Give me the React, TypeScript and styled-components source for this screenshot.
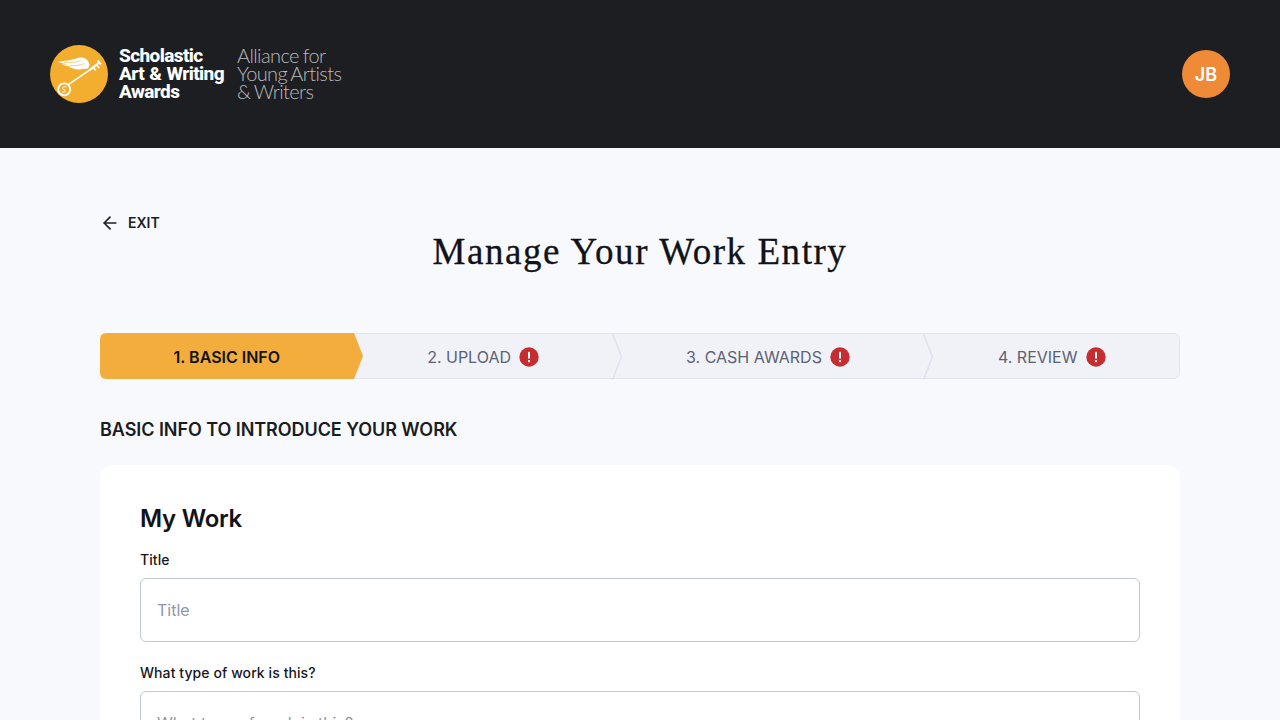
import React from "react";
import styled, { createGlobalStyle } from "styled-components";
import { ArrowLeft } from "lucide-react";

const Global = createGlobalStyle`
  html, body { margin: 0; padding: 0; background: #f8f9fd; overflow: hidden; }
  body { font-family: Inter, "Liberation Sans", sans-serif; color: #14161a; }
  * { box-sizing: border-box; }
`;

const Header = styled.header`
  height: 148px;
  background: #1c1e21;
  padding: 0 50px;
  display: flex;
  align-items: center;
  justify-content: space-between;
`;
const Logo = styled.div`
  display: flex;
  align-items: center;
`;
const BrandName = styled.div`
  margin-left: 11px;
  font-family: Roboto, "Liberation Sans", sans-serif;
  font-weight: 800;
  font-size: 19px;
  line-height: 18px;
  letter-spacing: -0.6px;
  word-spacing: 1px;
  color: #fff;
  white-space: nowrap;
`;
const BrandTag = styled.div`
  margin: -2px 0 0 13px;
  font-family: Lato, "Liberation Sans", sans-serif;
  font-weight: 300;
  font-size: 20px;
  line-height: 18px;
  letter-spacing: -0.6px;
  word-spacing: -1px;
  color: #b9babc;
  white-space: nowrap;
`;
const Avatar = styled.div`
  width: 48px;
  height: 48px;
  border-radius: 50%;
  background: #ef8a37;
  color: #fff;
  font-weight: 600;
  font-size: 18px;
  display: flex;
  align-items: center;
  justify-content: center;
`;
const Main = styled.main`
  width: 1080px;
  margin: 0 auto;
  padding-top: 66px;
`;
const ExitLink = styled.a`
  display: flex;
  align-items: center;
  gap: 8px;
  height: 18px;
  font-weight: 600;
  font-size: 14px;
  line-height: 18px;
  color: #1b1d24;
  svg { margin-top: -1px; }
`;
const Title = styled.h1`
  margin: -5px 0 0;
  text-align: center;
  font-family: "Liberation Serif", serif;
  font-weight: 400;
  font-size: 37px;
  line-height: 50px;
  letter-spacing: 1.55px;
  color: #111318;
  -webkit-text-stroke: 0.3px #111318;
`;
const Steps = styled.nav`
  margin-top: 56px;
  height: 46px;
  display: flex;
  border-radius: 6px;
  background: #f1f2f8;
  border: 1px solid #e1e3ed;
`;
const Step = styled.div<{ $active?: boolean }>`
  position: relative;
  flex: 1 1 auto;
  padding: 1px 73px 0;
  display: flex;
  align-items: center;
  justify-content: center;
  gap: 8px;
  font-size: 16px;
  white-space: nowrap;
  font-weight: ${(p) => (p.$active ? 600 : 400)};
  color: ${(p) => (p.$active ? "#111318" : "#5c6272")};
  &:nth-child(3) { padding-right: 74px; }
  ${(p) =>
    p.$active &&
    `
    margin: -1px 0 -1px -1px;
    background: #f2ad3c;
    border-radius: 6px 0 0 6px;
  `}
`;
const Chevron = styled.svg`
  position: absolute;
  top: 0;
  left: 100%;
  z-index: 1;
  margin-left: -1px;
`;
const Section = styled.h2`
  margin: 40px 0 0;
  font-size: 18px;
  line-height: 22px;
  font-weight: 600;
  letter-spacing: -0.06px;
  color: #1a1c21;
`;
const Card = styled.section`
  margin-top: 24px;
  background: #fff;
  border-radius: 12px;
  padding: 40px;
  height: 500px;
`;
const CardTitle = styled.h3`
  margin: 0;
  font-size: 24px;
  line-height: 28px;
  font-weight: 600;
  letter-spacing: -0.28px;
  color: #111318;
`;
const Label = styled.label`
  display: block;
  margin-top: 17px;
  font-size: 14px;
  line-height: 20px;
  font-weight: 500;
  letter-spacing: 0.08px;
  color: #16181d;
`;
const Input = styled.input`
  display: block;
  width: 100%;
  height: 64px;
  margin: 8px 0 0;
  padding: 0 16px;
  border: 1px solid #c0c7d6;
  border-radius: 6px;
  background: #fff;
  font-family: inherit;
  font-size: 16px;
  &::placeholder { color: #8f97a5; opacity: 1; }
  & + label { margin-top: 21px; }
`;

const Alert = () => (
  <svg width="20" height="20" viewBox="0 0 20 20" aria-hidden="true">
    <circle cx="10" cy="10" r="9.7" fill="#c62d30" />
    <rect x="9" y="4.8" width="2" height="7" rx="0.8" fill="#fff" />
    <rect x="9" y="13" width="2" height="2.2" rx="0.6" fill="#fff" />
  </svg>
);

const Arrow = () => (
  <Chevron width="11" height="46" viewBox="0 0 11 46" aria-hidden="true">
    <path d="M0.5 0 L9.5 22.5 L0.5 46" fill="#f1f2f8" stroke="#dde2ee" strokeWidth="1.5" />
  </Chevron>
);

const ActivePoint = () => (
  <Chevron width="11" height="46" viewBox="0 0 11 46" aria-hidden="true">
    <path d="M0 0 L1 0 L10 23 L1 46 L0 46 Z" fill="#f2ad3c" />
  </Chevron>
);

const LogoMark = () => (
  <svg width="58" height="58" viewBox="0 0 58 58" aria-hidden="true">
    <circle cx="29" cy="29" r="29" fill="#f3ae2f" />
    <path
      fill="#fff"
      d="M7.3 16.7 C14 16.2 22 15.2 26 13.6 C29 12.2 33 12.2 35.5 13.8 C38 15.4 39.5 18 39.5 20.5 L38 23.5 C35 23.8 31 24.5 28 24.6 C25 24.6 21 23 19 21.8 L24 22 C20 21.6 15 20.8 11 19.2 L19 19.8 C15.5 19 11 18 7.3 16.7 Z"
    />
    <g fill="none" stroke="#f3ae2f" strokeWidth="0.6">
      <path d="M14 17.6 C20 18 26 17.4 31 15.6" />
      <path d="M20 20.4 C25 21 30 20.4 34 18.6" />
    </g>
    <g fill="none" stroke="#fff" strokeLinecap="butt">
      <path d="M18.6 39.4 L42 23.4" strokeWidth="1.7" />
      <path d="M40 24.8 L49 17.6" strokeWidth="2.2" />
      <path d="M46.4 19.6 L49.2 23" strokeWidth="1.6" />
      <path d="M43.2 22.2 L45.8 25.4" strokeWidth="1.6" />
      <path d="M47.6 15.4 L50.8 19.4" strokeWidth="1.8" />
    </g>
    <circle cx="14.2" cy="44.3" r="6" fill="none" stroke="#fff" strokeWidth="1.8" />
    <path d="M16.4 41.8 C12.6 41 11.4 43.8 13.8 44.6 C16.2 45.4 15.8 47.8 12 47" fill="none" stroke="#fff" strokeWidth="1" />
  </svg>
);

export default function App() {
  return (
    <>
      <Global />
      <Header>
        <Logo>
          <LogoMark />
          <BrandName>
            Scholastic
            <br />
            Art &amp; Writing
            <br />
            Awards
          </BrandName>
          <BrandTag>
            Alliance for
            <br />
            Young Artists
            <br />
            &amp; Writers
          </BrandTag>
        </Logo>
        <Avatar>JB</Avatar>
      </Header>
      <Main>
        <ExitLink>
          <ArrowLeft size={20} strokeWidth={2} />
          EXIT
        </ExitLink>
        <Title>Manage Your Work Entry</Title>
        <Steps>
          <Step $active>
            1. BASIC INFO
            <ActivePoint />
          </Step>
          <Step>
            2. UPLOAD <Alert />
            <Arrow />
          </Step>
          <Step>
            3. CASH AWARDS <Alert />
            <Arrow />
          </Step>
          <Step>
            4. REVIEW <Alert />
          </Step>
        </Steps>
        <Section>BASIC INFO TO INTRODUCE YOUR WORK</Section>
        <Card>
          <CardTitle>My Work</CardTitle>
          <Label>Title</Label>
          <Input placeholder="Title" readOnly />
          <Label>What type of work is this?</Label>
          <Input placeholder="What type of work is this?" readOnly />
        </Card>
      </Main>
    </>
  );
}
